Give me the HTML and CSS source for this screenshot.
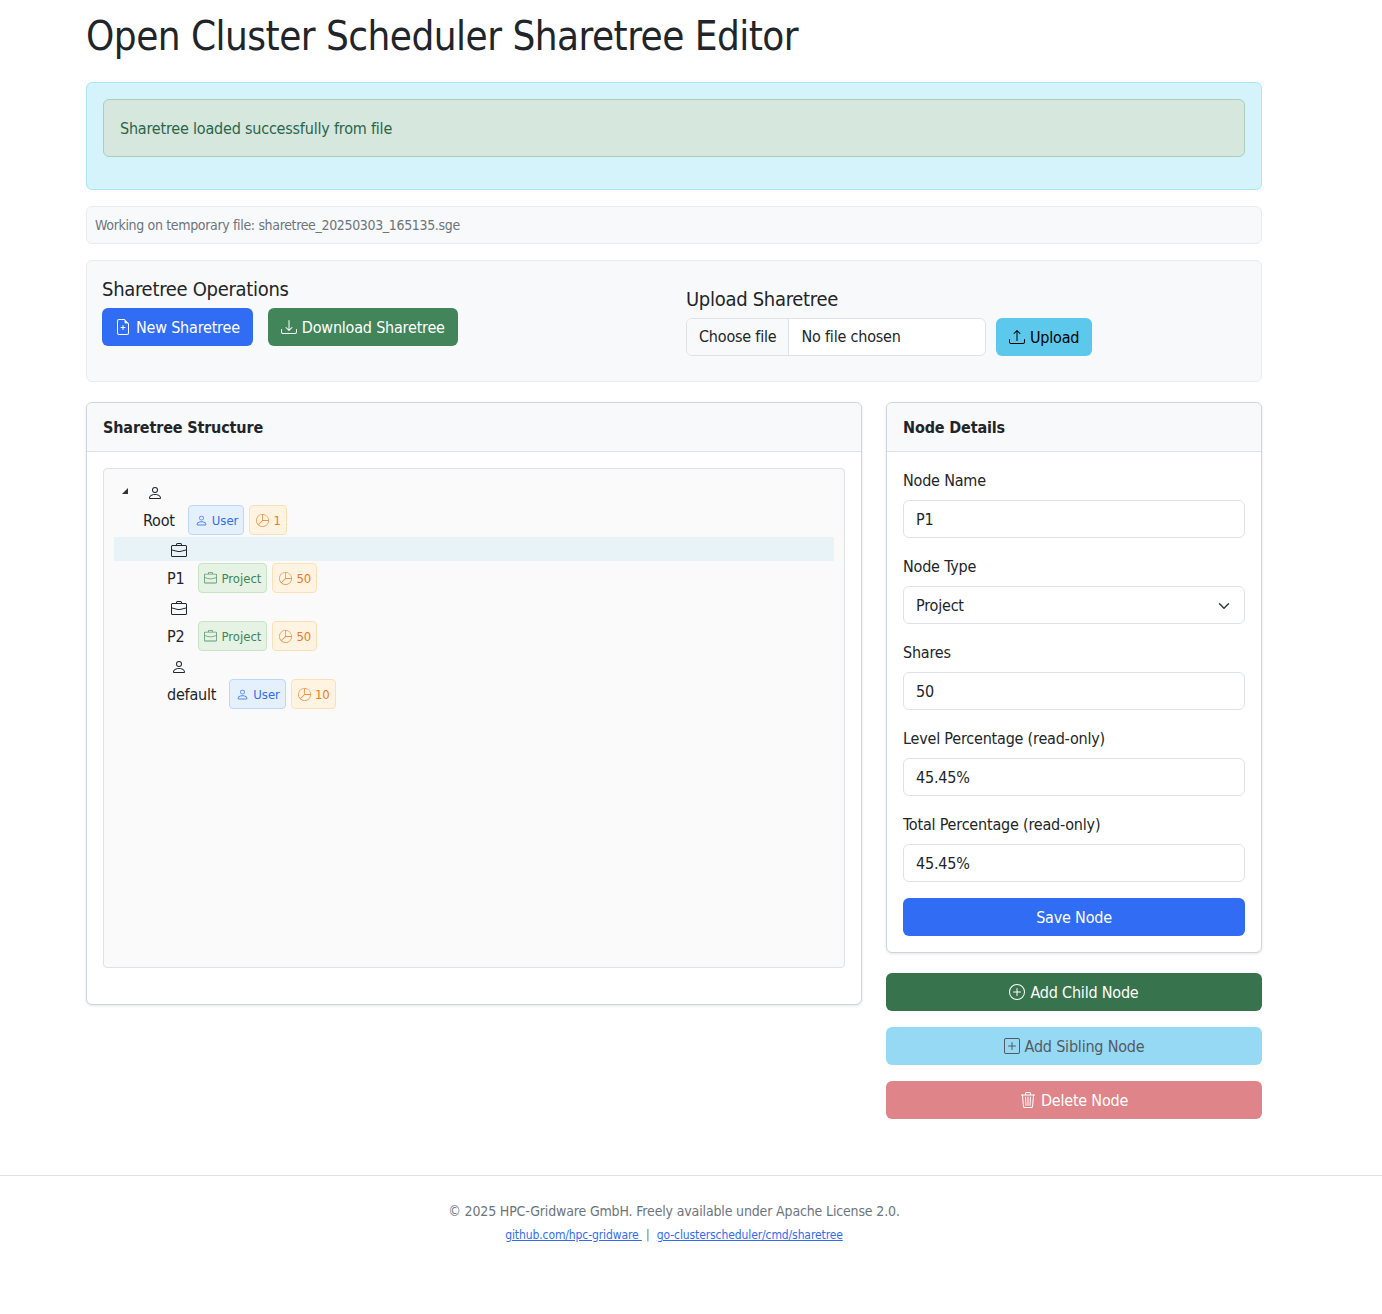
FILE: index.html
```html
<!doctype html>
<html lang="en">
<head>
    <meta charset="UTF-8">
    <title>Open Cluster Scheduler Sharetree Editor</title>
    <link rel="stylesheet" href="styles.css">
</head>
<body>
    <svg class="sprites" width="0" height="0">
        <symbol id="i-person" viewBox="0 0 16 16"><path d="M8 8a3 3 0 1 0 0-6 3 3 0 0 0 0 6zm2-3a2 2 0 1 1-4 0 2 2 0 0 1 4 0zm4 8c0 1-1 1-1 1H3s-1 0-1-1 1-4 6-4 6 3 6 4zm-1-.004c-.001-.246-.154-.986-.832-1.664C11.516 10.68 10.289 10 8 10c-2.29 0-3.516.68-4.168 1.332-.678.678-.83 1.418-.832 1.664h10z"/></symbol>
        <symbol id="i-case" viewBox="0 0 16 16"><path d="M0 3.5A1.5 1.5 0 0 1 1.5 2h13A1.5 1.5 0 0 1 16 3.5v9a1.5 1.5 0 0 1-1.5 1.5h-13A1.5 1.5 0 0 1 0 12.5zM1.5 3a.5.5 0 0 0-.5.5V6.5l6 1.5h2l6-1.500V3.5a.5.5 0 0 0-.5-.5zM15 7.530 9.100 9H6.900L1 7.530V12.500a.5.5 0 0 0 .5.5h13a.5.5 0 0 0 .5-.5zM5 2V1.500A1.500 1.500 0 0 1 6.500 0h3A1.500 1.500 0 0 1 11 1.500V2h-1V1.500a.5.5 0 0 0-.5-.5h-3a.5.5 0 0 0-.5.5V2z"/></symbol>
        <symbol id="i-pie" viewBox="0 0 16 16"><path d="M7.5 1.018a7 7 0 0 0-4.790 11.566L7.5 7.793V1.018zm1 0V7.5h6.482A7.001 7.001 0 0 0 8.5 1.018zM14.982 8.5H8.207l-4.790 4.790A7 7 0 0 0 14.982 8.5zM0 8a8 8 0 1 1 16 0A8 8 0 0 1 0 8z"/></symbol>
    </svg>

    <div class="page">
        <h1 class="title">Open Cluster Scheduler Sharetree Editor</h1>

        <div class="info-box">
            <div class="success-box">Sharetree loaded successfully from file</div>
        </div>

        <div class="file-note">Working on temporary file: sharetree_20250303_165135.sge</div>

        <div class="ops">
            <div class="ops-left">
                <h4 class="ops-title">Sharetree Operations</h4>
                <div class="ops-buttons">
                    <button class="btn btn-blue">
                        <svg class="ico" viewBox="0 0 16 16"><path d="M8.5 6.5a.5.5 0 0 0-1 0V8H6a.5.5 0 0 0 0 1h1.5v1.5a.5.5 0 0 0 1 0V9H10a.5.5 0 0 0 0-1H8.5z"/><path d="M14 4.5V14a2 2 0 0 1-2 2H4a2 2 0 0 1-2-2V2a2 2 0 0 1 2-2h5.5L14 4.5zm-3 0A1.5 1.5 0 0 1 9.5 3V1H4a1 1 0 0 0-1 1v12a1 1 0 0 0 1 1h8a1 1 0 0 0 1-1V4.5z"/></svg>
                        New Sharetree
                    </button>
                    <button class="btn btn-green">
                        <svg class="ico" viewBox="0 0 16 16"><path d="M.5 9.9a.5.5 0 0 1 .5.5v2.5a1 1 0 0 0 1 1h12a1 1 0 0 0 1-1v-2.5a.5.5 0 0 1 1 0v2.500a2 2 0 0 1-2 2H2a2 2 0 0 1-2-2v-2.500a.5.5 0 0 1 .5-.5z"/><path d="M7.646 11.854a.5.5 0 0 0 .708 0l3-3a.5.5 0 0 0-.708-.708L8.5 10.293V1.5a.5.5 0 0 0-1 0v8.793L5.354 8.146a.5.5 0 1 0-.708.708l3 3z"/></svg>
                        Download Sharetree
                    </button>
                </div>
            </div>
            <div class="ops-right">
                <h4 class="ops-title upload-title">Upload Sharetree</h4>
                <div class="upload-row">
                    <div class="file-input">
                        <span class="file-btn">Choose file</span>
                        <span class="file-name">No file chosen</span>
                    </div>
                    <button class="btn btn-cyan">
                        <svg class="ico" viewBox="0 0 16 16"><path d="M.5 9.9a.5.5 0 0 1 .5.5v2.5a1 1 0 0 0 1 1h12a1 1 0 0 0 1-1v-2.500a.5.5 0 0 1 1 0v2.500a2 2 0 0 1-2 2H2a2 2 0 0 1-2-2v-2.500a.5.5 0 0 1 .5-.5z"/><path d="M7.646 1.146a.5.5 0 0 1 .708 0l3 3a.5.5 0 0 1-.708.708L8.5 2.707V11.5a.5.5 0 0 1-1 0V2.707L5.354 4.854a.5.5 0 1 1-.708-.708l3-3z"/></svg>
                        Upload
                    </button>
                </div>
            </div>
        </div>

        <div class="columns">
            <div class="card tree-card">
                <div class="card-head">Sharetree Structure</div>
                <div class="card-body">
                    <div class="tree">
                        <div class="node">
                            <div class="node-icon root-icon"><span class="caret"></span><svg class="ico"><use href="#i-person"/></svg></div>
                            <div class="node-line root-line">
                                <span class="node-name">Root</span>
                                <span class="tag tag-user"><svg class="ico-sm"><use href="#i-person"/></svg>User</span>
                                <span class="tag tag-share"><svg class="ico-sm"><use href="#i-pie"/></svg>1</span>
                            </div>
                        </div>
                        <div class="node">
                            <div class="node-icon child-icon selected"><svg class="ico"><use href="#i-case"/></svg></div>
                            <div class="node-line child-line">
                                <span class="node-name">P1</span>
                                <span class="tag tag-project"><svg class="ico-sm"><use href="#i-case"/></svg>Project</span>
                                <span class="tag tag-share"><svg class="ico-sm"><use href="#i-pie"/></svg>50</span>
                            </div>
                        </div>
                        <div class="node">
                            <div class="node-icon child-icon"><svg class="ico"><use href="#i-case"/></svg></div>
                            <div class="node-line child-line">
                                <span class="node-name">P2</span>
                                <span class="tag tag-project"><svg class="ico-sm"><use href="#i-case"/></svg>Project</span>
                                <span class="tag tag-share"><svg class="ico-sm"><use href="#i-pie"/></svg>50</span>
                            </div>
                        </div>
                        <div class="node">
                            <div class="node-icon child-icon"><svg class="ico"><use href="#i-person"/></svg></div>
                            <div class="node-line child-line">
                                <span class="node-name">default</span>
                                <span class="tag tag-user"><svg class="ico-sm"><use href="#i-person"/></svg>User</span>
                                <span class="tag tag-share"><svg class="ico-sm"><use href="#i-pie"/></svg>10</span>
                            </div>
                        </div>
                    </div>
                </div>
            </div>

            <div class="side">
                <div class="card">
                    <div class="card-head">Node Details</div>
                    <div class="card-body form">
                        <div class="field">
                            <div class="field-label">Node Name</div>
                            <div class="input">P1</div>
                        </div>
                        <div class="field">
                            <div class="field-label">Node Type</div>
                            <div class="input select">Project
                                <svg class="chevron" viewBox="0 0 16 16"><path fill="none" stroke="#343a40" stroke-linecap="round" stroke-linejoin="round" stroke-width="2" d="m2 5 6 6 6-6"/></svg>
                            </div>
                        </div>
                        <div class="field">
                            <div class="field-label">Shares</div>
                            <div class="input">50</div>
                        </div>
                        <div class="field">
                            <div class="field-label">Level Percentage (read-only)</div>
                            <div class="input">45.45%</div>
                        </div>
                        <div class="field">
                            <div class="field-label">Total Percentage (read-only)</div>
                            <div class="input">45.45%</div>
                        </div>
                        <button class="btn btn-blue btn-wide">Save Node</button>
                    </div>
                </div>
                <div class="actions">
                    <button class="btn btn-wide btn-child">
                        <svg class="ico" viewBox="0 0 16 16"><path d="M8 15A7 7 0 1 1 8 1a7 7 0 0 1 0 14zm0 1A8 8 0 1 0 8 0a8 8 0 0 0 0 16z"/><path d="M8 4a.5.5 0 0 1 .5.5v3h3a.5.5 0 0 1 0 1h-3v3a.5.5 0 0 1-1 0v-3h-3a.5.5 0 0 1 0-1h3v-3A.5.5 0 0 1 8 4z"/></svg>
                        Add Child Node
                    </button>
                    <button class="btn btn-wide btn-sibling">
                        <svg class="ico" viewBox="0 0 16 16"><path d="M14 1a1 1 0 0 1 1 1v12a1 1 0 0 1-1 1H2a1 1 0 0 1-1-1V2a1 1 0 0 1 1-1h12zM2 0a2 2 0 0 0-2 2v12a2 2 0 0 0 2 2h12a2 2 0 0 0 2-2V2a2 2 0 0 0-2-2H2z"/><path d="M8 4a.5.5 0 0 1 .5.5v3h3a.5.5 0 0 1 0 1h-3v3a.5.5 0 0 1-1 0v-3h-3a.5.5 0 0 1 0-1h3v-3A.5.5 0 0 1 8 4z"/></svg>
                        Add Sibling Node
                    </button>
                    <button class="btn btn-wide btn-delete">
                        <svg class="ico" viewBox="0 0 16 16"><path d="M6.5 1h3a.5.5 0 0 1 .5.5v1H6v-1a.5.5 0 0 1 .5-.5ZM11 2.5v-1A1.5 1.5 0 0 0 9.5 0h-3A1.5 1.5 0 0 0 5 1.5v1H1.5a.5.5 0 0 0 0 1h.538l.853 10.66A2 2 0 0 0 4.885 16h6.23a2 2 0 0 0 1.994-1.84l.853-10.66h.538a.5.5 0 0 0 0-1H11Zm1.958 1-.846 10.58a1 1 0 0 1-.997.92h-6.23a1 1 0 0 1-.997-.92L3.042 3.5h9.916Zm-7.487 1a.5.5 0 0 1 .528.47l.5 8.5a.5.5 0 0 1-.998.06L5 5.03a.5.5 0 0 1 .47-.53Zm5.058 0a.5.5 0 0 1 .47.53l-.5 8.5a.5.5 0 1 1-.998-.06l.5-8.5a.5.5 0 0 1 .528-.47ZM8 4.5a.5.5 0 0 1 .5.5v8.5a.5.5 0 0 1-1 0V5a.5.5 0 0 1 .5-.5Z"/></svg>
                        Delete Node
                    </button>
                </div>
            </div>
        </div>
    </div>

    <footer class="footer">
        <p class="copy">© 2025 HPC-Gridware GmbH. Freely available under Apache License 2.0.</p>
        <p class="links"><a href="#">github.com/hpc-gridware </a> | <a href="#">go-clusterscheduler/cmd/sharetree</a></p>
    </footer>
</body>
</html>
```

FILE: styles.css
```css
*{
    box-sizing: border-box;
}
body{
    margin: 0;
    background: #ffffff;
    color: #212529;
    font-family: "DejaVu Sans Condensed", "DejaVu Sans", sans-serif;
    font-size: 16px;
    line-height: 24px;
    letter-spacing: -0.2px;
}
.sprites{
    position: absolute;
}
.page{
    width: 1176px;
    margin-left: 86px;
}
.title{
    margin: 0;
    height: 82px;
    padding-top: 7px;
    font-size: 40px;
    font-weight: 400;
    line-height: 58px;
    letter-spacing: -0.52px;
}
.info-box{
    height: 108px;
    margin-bottom: 16px;
    padding: 16px;
    background: #d5f3fb;
    border: 1px solid #a8e8f6;
    border-radius: 6px;
}
.success-box{
    height: 58px;
    padding: 17px 16px 0;
    color: #2a6549;
    background: #d6e7de;
    border: 1px solid #a9cfbb;
    border-radius: 6px;
}
.file-note{
    height: 38px;
    margin-bottom: 16px;
    padding: 6px 8px;
    font-size: 14px;
    letter-spacing: -0.34px;
    color: #6c757d;
    background: #f8f9fa;
    border: 1px solid #e9ecef;
    border-radius: 6px;
}
.ops{
    display: flex;
    height: 122px;
    margin-bottom: 20px;
    padding: 16px 15px;
    background: #f8f9fa;
    border: 1px solid #e9ecef;
    border-radius: 6px;
}
.ops-left{
    width: 584px;
}
.ops-title{
    margin: 0 0 7px;
    font-size: 20px;
    font-weight: 400;
    line-height: 24px;
    letter-spacing: -0.3px;
}
.upload-title{
    margin-top: 10px;
    margin-bottom: 7px;
}
.ops-buttons{
    display: flex;
    gap: 15px;
}
.upload-row{
    display: flex;
    gap: 10px;
}
.btn{
    display: inline-flex;
    align-items: center;
    justify-content: center;
    gap: 5px;
    height: 38px;
    padding: 0 12px;
    font-family: inherit;
    font-size: 16px;
    letter-spacing: inherit;
    border: 1px solid transparent;
    border-radius: 6px;
    color: #ffffff;
    cursor: pointer;
}
.btn-blue{
    background: #316cf4;
}
.btn-green{
    background: #42855b;
}
.btn-cyan{
    color: #000000;
    background: #5cc8ec;
}
.btn-wide{
    width: 100%;
}
.btn-child{
    background: #37734c;
}
.btn-sibling{
    color: #555a5e;
    background: #96d9f5;
}
.btn-delete{
    background: #df8488;
}
.ico{
    width: 16px;
    height: 16px;
    flex: none;
    fill: currentColor;
}
.ico-sm{
    width: 13px;
    height: 13px;
    flex: none;
    fill: currentColor;
    opacity: 0.8;
}
.file-input{
    display: flex;
    width: 300px;
    height: 38px;
    background: #ffffff;
    border: 1px solid #dee2e6;
    border-radius: 6px;
    overflow: hidden;
}
.file-btn{
    padding: 6px 12px;
    background: #f8f9fa;
    border-right: 1px solid #dee2e6;
}
.file-name{
    padding: 6px 12px;
}
.columns{
    display: flex;
    align-items: flex-start;
    gap: 24px;
}
.card{
    background: #ffffff;
    border: 1px solid #ced4da;
    border-radius: 6px;
    box-shadow: 0 1px 3px rgba(0, 0, 0, 0.1);
}
.tree-card{
    width: 776px;
    height: 603px;
}
.card-head{
    height: 49px;
    padding: 13px 16px 0;
    font-weight: 700;
    letter-spacing: -0.15px;
    background: #f8f9fa;
    border-bottom: 1px solid #dee2e6;
    border-radius: 6px 6px 0 0;
}
.card-body{
    padding: 16px;
}
.tree{
    height: 500px;
    padding: 10px;
    background: #fafafa;
    border: 1px solid #dee2e6;
    border-radius: 4px;
}
.node-icon{
    display: flex;
    align-items: center;
    height: 24px;
    padding-top: 3px;
}
.root-icon{
    padding-left: 8px;
    gap: 19px;
}
.child-icon{
    padding-left: 57px;
}
.selected{
    background: #e8f3f8;
}
.caret{
    width: 0;
    height: 0;
    border-left: 6px solid transparent;
    border-bottom: 6px solid #333333;
    margin-bottom: 4px;
}
.node-line{
    display: flex;
    align-items: center;
    height: 34px;
}
.root-line{
    padding-left: 29px;
}
.child-line{
    padding-left: 53px;
}
.node-name{
    margin-right: 13px;
    padding-top: 1px;
}
.tag{
    display: inline-flex;
    align-items: center;
    gap: 4px;
    height: 30px;
    margin-right: 5px;
    padding: 1px 5px 0 6px;
    font-size: 13px;
    letter-spacing: 0;
    border-radius: 4px;
    border: 1px solid;
}
.tag-user{
    color: #316cf4;
    background: #e4f0fc;
    border-color: #bcd8f8;
}
.tag-project{
    margin-left: 1px;
    padding-left: 5px;
    color: #3f8459;
    background: #e6f3e4;
    border-color: #c6e4c4;
}
.tag-share{
    color: #ef7a23;
    background: #fff3e2;
    border-color: #fde0b8;
}
.side{
    width: 376px;
}
.form{
    padding-bottom: 16px;
}
.field{
    height: 86px;
}
.field-label{
    height: 32px;
    padding-top: 1px;
}
.input{
    height: 38px;
    padding: 7px 12px 0;
    background: #ffffff;
    border: 1px solid #dee2e6;
    border-radius: 6px;
}
.select{
    display: flex;
    align-items: center;
    justify-content: space-between;
    padding-top: 1px;
}
.chevron{
    width: 12px;
    height: 12px;
    margin-right: 2px;
}
.actions{
    display: flex;
    flex-direction: column;
    gap: 16px;
    margin-top: 20px;
}
.footer{
    margin-top: 56px;
    height: 139px;
    padding: 25px 34px 0 0;
    text-align: center;
    border-top: 1px solid #dee2e6;
}
.copy{
    margin: 0;
    font-size: 14px;
    line-height: 21px;
    letter-spacing: -0.15px;
    color: #6c757d;
}
.links{
    margin: 3px 0 0;
    font-size: 12px;
    line-height: 21px;
    letter-spacing: -0.1px;
    color: #6c757d;
}
.links a{
    color: #316cf4;
    margin: 0 4px;
}
```
